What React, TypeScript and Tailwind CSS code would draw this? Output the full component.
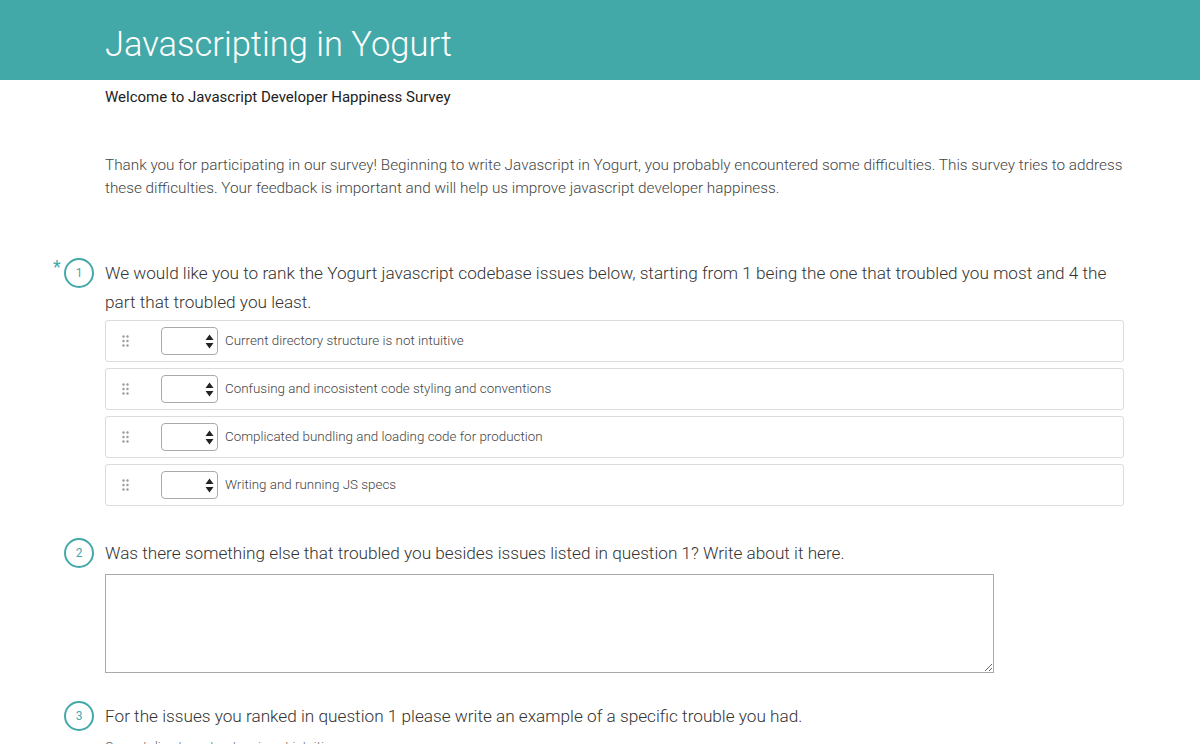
import { useState } from 'react'

const issues = [
  'Current directory structure is not intuitive',
  'Confusing and incosistent code styling and conventions',
  'Complicated bundling and loading code for production',
  'Writing and running JS specs',
]

function DragHandle() {
  return (
    <svg width="8" height="12" viewBox="0 0 8 12" className="text-[#9a9a9a]">
      {[1, 5].map((x) =>
        [1.5, 6, 10.5].map((y) => <circle key={`${x}-${y}`} cx={x + 0.5} cy={y} r="1.2" fill="currentColor" />)
      )}
    </svg>
  )
}

function QuestionHead({ n, text, required }: { n: number; text: string; required?: boolean }) {
  return (
    <div className="relative flex">
      {required && <span className="absolute left-[-52px] top-[-6px] text-[18px] text-[#43a9a8]">*</span>}
      <div className="absolute left-[-41px] top-[-1px] flex h-[30px] w-[30px] items-center justify-center rounded-full border-2 border-[#43a9a8] text-[12px] text-[#43a9a8]">
        {n}
      </div>
      <p className="text-[17.2px] font-light leading-[29px] text-[#333]">{text}</p>
    </div>
  )
}

export default function App() {
  const [ranks, setRanks] = useState<string[]>(['', '', '', ''])
  const [notes, setNotes] = useState('')

  return (
    <div className="min-h-screen bg-white font-['Roboto',sans-serif]">
      {/* header */}
      <div className="h-[80px] bg-[#43a9a8]">
        <h1 className="pl-[105px] pt-[20px] text-[34.5px] font-light leading-[48px] text-white">Javascripting in Yogurt</h1>
      </div>

      <div className="mx-0 w-[1124px] pl-[105px]">
        <p className="pt-[7px] text-[15px] leading-[20px] text-[#222]">Welcome to Javascript Developer Happiness Survey</p>

        <p className="mt-[47px] text-[15.3px] font-light leading-[23px] text-[#444]">
          Thank you for participating in our survey! Beginning to write Javascript in Yogurt, you probably encountered some difficulties. This survey tries to address these difficulties. Your feedback is important and will help us improve javascript developer happiness.
        </p>

        {/* question 1 */}
        <div className="mt-[59px]">
          <QuestionHead
            n={1}
            required
            text="We would like you to rank the Yogurt javascript codebase issues below, starting from 1 being the one that troubled you most and 4 the part that troubled you least."
          />
          <div className="mt-[3px] flex flex-col gap-[6px]">
            {issues.map((issue, i) => (
              <div key={issue} className="flex h-[42px] items-center rounded-[3px] border border-[#dcdcdc]">
                <div className="flex w-[55px] justify-start pl-[16px]">
                  <DragHandle />
                </div>
                <div className="relative h-[28px] w-[57px] rounded-[4px] border border-[#aaa]">
                  <select
                    value={ranks[i]}
                    onChange={(e) => setRanks(ranks.map((r, j) => (j === i ? e.target.value : r)))}
                    className="h-full w-full appearance-none bg-transparent pl-2 text-[13px] outline-none"
                  >
                    <option value=""></option>
                    <option value="1">1</option>
                    <option value="2">2</option>
                    <option value="3">3</option>
                    <option value="4">4</option>
                  </select>
                  <svg width="9" height="15" viewBox="0 0 9 15" className="pointer-events-none absolute right-[3px] top-[6px]">
                    <path d="M4.5 0.5 L8.5 6 H0.5 Z" fill="#222" />
                    <path d="M4.5 14.5 L8.5 9 H0.5 Z" fill="#222" />
                  </svg>
                </div>
                <span className="ml-[7px] text-[13.4px] font-light text-[#444]">{issue}</span>
              </div>
            ))}
          </div>
        </div>

        {/* question 2 */}
        <div className="mt-[33px]">
          <QuestionHead n={2} text="Was there something else that troubled you besides issues listed in question 1? Write about it here." />
          <textarea
            value={notes}
            onChange={(e) => setNotes(e.target.value)}
            className="mt-[6px] block h-[99px] w-[889px] border border-[#a9a9a9] outline-none"
          />
        </div>

        {/* question 3 */}
        <div className="mt-[29px]">
          <QuestionHead n={3} text="For the issues you ranked in question 1 please write an example of a specific trouble you had." />
          <p className="mt-[8px] text-[13px] font-light leading-[16px] text-[#666]">Current directory structure is not intuitive</p>
        </div>
      </div>
    </div>
  )
}
